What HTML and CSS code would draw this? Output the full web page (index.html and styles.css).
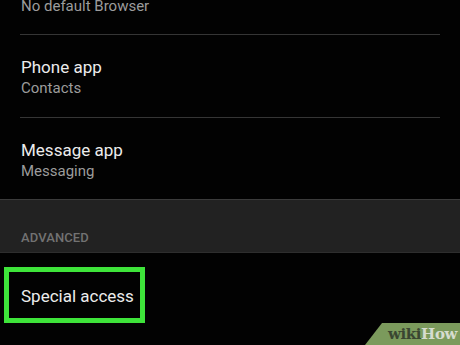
FILE: index.html
```html
<!DOCTYPE html>
<html>
<head>
<meta charset="utf-8">
<link rel="stylesheet" href="styles.css">
</head>
<body>
<div class="screen">
  <div class="row row-partial">
    <div class="sub">No default Browser</div>
  </div>
  <div class="divider"></div>
  <div class="row">
    <div class="title">Phone app</div>
    <div class="sub">Contacts</div>
  </div>
  <div class="divider"></div>
  <div class="row row-last">
    <div class="title">Message app</div>
    <div class="sub">Messaging</div>
  </div>
  <div class="section">
    <div class="section-label">ADVANCED</div>
  </div>
  <div class="row row-single">
    <div class="title">Special access</div>
    <div class="highlight"></div>
  </div>
  <div class="watermark"><span class="wiki">wiki</span><span class="how">How</span></div>
</div>
</body>
</html>
```

FILE: styles.css
```css
html, body {
  margin: 0;
  padding: 0;
  background: #000;
}
.screen {
  position: relative;
  width: 460px;
  height: 345px;
  overflow: hidden;
  background: #020202;
  font-family: Roboto, "Noto Sans", sans-serif;
}
.row {
  position: relative;
  box-sizing: border-box;
  height: 82px;
  padding: 21px 0 0 21px;
}
.row-partial {
  height: 38px;
  padding-top: 0;
  margin-top: -4px;
}
.row-last {
  height: 81px;
}
.title {
  font-size: 17px;
  line-height: 22px;
  color: #ececec;
}
.sub {
  font-size: 15px;
  line-height: 20px;
  color: #9c9c9c;
}
.divider {
  height: 1px;
  margin: 0 20px;
  background: #353535;
}
.section {
  box-sizing: border-box;
  height: 54px;
  border-top: 1px solid #3b3b3b;
  border-bottom: 1px solid #2e2e2e;
  background: #222222;
  padding: 30px 0 0 21px;
}
.section-label {
  font-size: 13px;
  line-height: 16px;
  font-weight: 500;
  color: #727272;
  letter-spacing: 0.1px;
}
.row-single {
  height: 92px;
  padding-top: 32px;
}
.highlight {
  position: absolute;
  left: 4px;
  top: 14px;
  width: 141px;
  height: 56px;
  box-sizing: border-box;
  border: 5px solid #3ee43a;
}
.watermark {
  position: absolute;
  left: 365px;
  top: 323px;
  width: 95px;
  height: 22px;
  background: #7b9a5c;
  clip-path: polygon(17px 0, 100% 0, 100% 100%, 0 100%);
  box-sizing: border-box;
  padding-left: 23px;
  font-family: "DejaVu Serif", "Liberation Serif", serif;
  font-weight: bold;
  font-size: 15px;
  line-height: 23px;
  letter-spacing: -0.4px;
}
.wiki {
  color: #3a4631;
}
.how {
  color: #d6dccf;
}
```
